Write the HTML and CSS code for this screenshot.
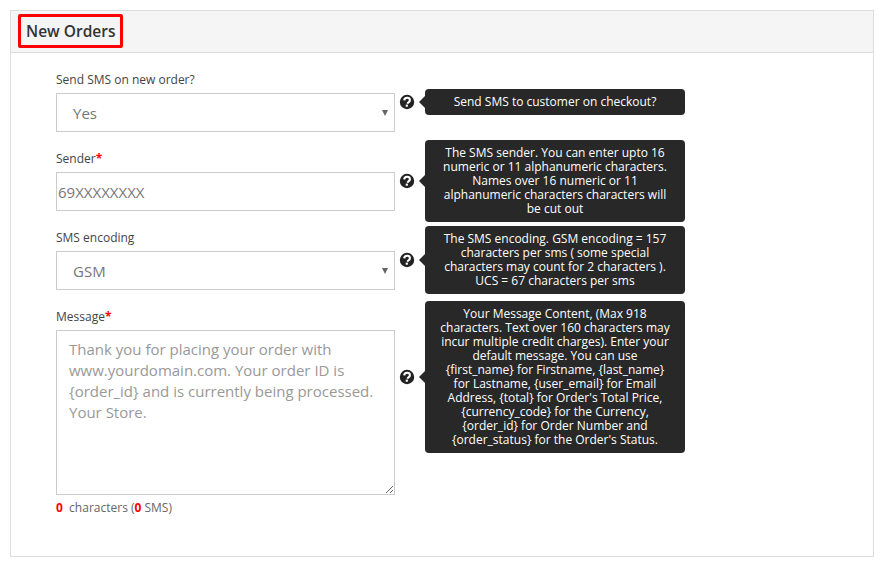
FILE: index.html
```html
<!DOCTYPE html>
<html lang="en">
<head>
<meta charset="utf-8">
<title>New Orders</title>
<link rel="stylesheet" href="styles.css">
</head>
<body>
<section class="panel">
  <header class="panel-head"><h2 class="panel-title">New Orders</h2></header>
  <form class="panel-body">
    <div class="row row-first">
      <div class="field">
        <label class="label">Send SMS on new order?</label>
        <div class="select"><span>Yes</span><i class="caret"></i></div>
      </div>
      <div class="help">
        <svg class="help-icon" viewBox="0 0 16 16"><circle cx="8" cy="8" r="7.2" fill="#222"/><path d="M5.2 6.4C5.3 4.7 6.5 3.8 8.1 3.8c1.6 0 2.8 1 2.8 2.4 0 1-.6 1.6-1.4 2.1-.6.4-.8.7-.8 1.4" fill="none" stroke="#fff" stroke-width="2.1"/><rect x="6.7" y="10.6" width="2.2" height="2.1" fill="#fff"/></svg>
        <div class="tip">Send SMS to customer on checkout?</div>
      </div>
    </div>
    <div class="row row-second">
      <div class="field">
        <label class="label label-req">Sender<b class="req">*</b></label>
        <div class="input">69XXXXXXXX</div>
      </div>
      <div class="help">
        <svg class="help-icon" viewBox="0 0 16 16"><circle cx="8" cy="8" r="7.2" fill="#222"/><path d="M5.2 6.4C5.3 4.7 6.5 3.8 8.1 3.8c1.6 0 2.8 1 2.8 2.4 0 1-.6 1.6-1.4 2.1-.6.4-.8.7-.8 1.4" fill="none" stroke="#fff" stroke-width="2.1"/><rect x="6.7" y="10.6" width="2.2" height="2.1" fill="#fff"/></svg>
        <div class="tip">The SMS sender. You can enter upto 16 numeric or 11 alphanumeric characters. Names over 16 numeric or 11 alphanumeric characters characters will be cut out</div>
      </div>
    </div>
    <div class="row row-third">
      <div class="field">
        <label class="label">SMS encoding</label>
        <div class="select"><span>GSM</span><i class="caret"></i></div>
      </div>
      <div class="help">
        <svg class="help-icon" viewBox="0 0 16 16"><circle cx="8" cy="8" r="7.2" fill="#222"/><path d="M5.2 6.4C5.3 4.7 6.5 3.8 8.1 3.8c1.6 0 2.8 1 2.8 2.4 0 1-.6 1.6-1.4 2.1-.6.4-.8.7-.8 1.4" fill="none" stroke="#fff" stroke-width="2.1"/><rect x="6.7" y="10.6" width="2.2" height="2.1" fill="#fff"/></svg>
        <div class="tip">The SMS encoding. GSM encoding = 157 characters per sms ( some special characters may count for 2 characters ). UCS = 67 characters per sms</div>
      </div>
    </div>
    <div class="row row-message">
      <div class="field">
        <label class="label label-req">Message<b class="req">*</b></label>
        <textarea class="textarea" placeholder="Thank you for placing your order with www.yourdomain.com. Your order ID is {order_id} and is currently being processed. Your Store."></textarea>
        <p class="count"><b class="req">0</b>&nbsp; characters (<b class="req">0</b> SMS)</p>
      </div>
      <div class="help help-message">
        <svg class="help-icon" viewBox="0 0 16 16"><circle cx="8" cy="8" r="7.2" fill="#222"/><path d="M5.2 6.4C5.3 4.7 6.5 3.8 8.1 3.8c1.6 0 2.8 1 2.8 2.4 0 1-.6 1.6-1.4 2.1-.6.4-.8.7-.8 1.4" fill="none" stroke="#fff" stroke-width="2.1"/><rect x="6.7" y="10.6" width="2.2" height="2.1" fill="#fff"/></svg>
        <div class="tip">Your Message Content, (Max 918 characters. Text over 160 characters may incur multiple credit charges). Enter your default message. You can use {first_name} for Firstname, {last_name} for Lastname, {user_email} for Email Address, {total} for Order's Total Price, {currency_code} for the Currency, {order_id} for Order Number and {order_status} for the Order's Status.</div>
      </div>
    </div>
  </form>
</section>
</body>
</html>
```
FILE: styles.css
```css
* { box-sizing: border-box; }
html, body { margin: 0; height: 100%; background: #fff; }
body {
  padding: 10px 12px 0 10px;
  font-family: "Open Sans", "Liberation Sans", sans-serif;
  font-size: 12px;
  color: #444;
  overflow: hidden;
}
.panel {
  height: 547px;
  border: 1px solid #ddd;
}
.panel-head {
  height: 42px;
  padding: 3px 7px;
  background: #f5f5f5;
  border-bottom: 1px solid #ddd;
}
.panel-title {
  display: inline-block;
  margin: 0;
  height: 34px;
  padding: 0 5px;
  border: 3px solid #f00;
  border-radius: 2px;
  font-size: 15.5px;
  font-weight: 600;
  line-height: 28px;
  color: #333;
}
.panel-body { padding: 19px 0 0 45px; display: flex; flex-direction: column; }
.row { display: flex; align-items: center; }
.row-second { margin-top: 18px; }
.row-third { margin-top: 19px; }
.row-message { margin-top: 18px; align-items: flex-start; }
.field { width: 339px; flex: none; }
.label { display: block; height: 21px; line-height: 16px; color: #444; }
.label-req { height: 22px; line-height: 18px; }
.req { color: #f00; font-weight: 700; }
.select, .input, .textarea {
  display: block;
  width: 339px;
  border: 1px solid #ccc;
  background: #fff;
  color: #777;
  font-family: inherit;
  font-size: 15px;
}
.select {
  height: 39px;
  padding: 0 6px 0 16px;
  display: flex;
  align-items: center;
  justify-content: space-between;
}
.caret {
  width: 0;
  height: 0;
  border-left: 3px solid transparent;
  border-right: 3px solid transparent;
  border-top: 6px solid #666;
}
.input { height: 39px; line-height: 39px; padding-left: 1px; }
.textarea {
  height: 165px;
  padding: 8px 12px;
  line-height: 21px;
  border-radius: 0;
  outline: 0;
  resize: both;
}
.textarea::placeholder { color: #999; opacity: 1; }
.count { margin: 4px 0 0; line-height: 18px; font-size: 12px; color: #666; }
.help { position: relative; margin-left: 4px; width: 16px; height: 16px; }
.help-message { margin-top: 61px; }
.help-icon { display: block; width: 16px; height: 16px; }
.tip {
  position: absolute;
  left: 26px;
  top: 8px;
  width: 260px;
  transform: translateY(-50%);
  padding: 6px 13px;
  background: #282828;
  border-radius: 4px;
  color: #fff;
  font-size: 12px;
  line-height: 14px;
  text-align: center;
}
.tip::before {
  content: "";
  position: absolute;
  left: -6px;
  top: 50%;
  margin-top: -6px;
  border-top: 6px solid transparent;
  border-bottom: 6px solid transparent;
  border-right: 6px solid #282828;
}
```
